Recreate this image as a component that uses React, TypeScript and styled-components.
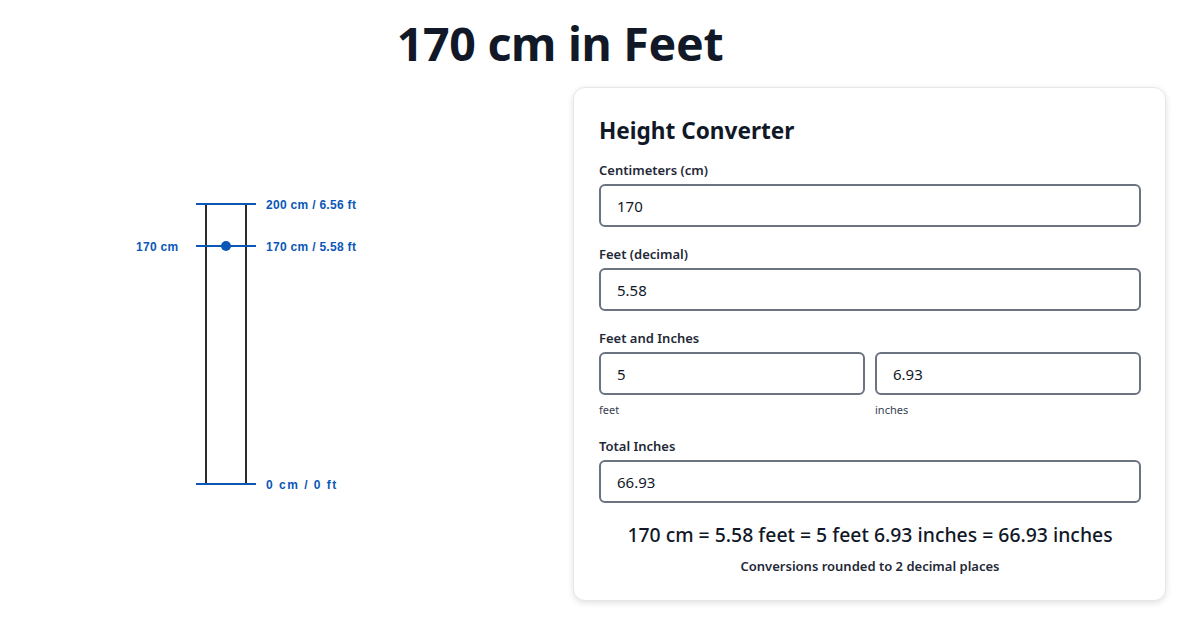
import React from "react";
import styled, { createGlobalStyle } from "styled-components";

const Global = createGlobalStyle`
  html, body { margin: 0; padding: 0; background: #ffffff; }
  body { font-family: "Noto Sans", "Open Sans", Arial, sans-serif; color: #111827; }
  * { box-sizing: border-box; }
`;

const Page = styled.div`
  width: 1200px;
  height: 630px;
  display: flex;
  flex-direction: column;
`;

const Title = styled.h1`
  margin: 12px 0 0 0;
  padding-right: 80px;
  text-align: center;
  font-size: 46.5px;
  line-height: 62px;
  font-weight: 700;
  color: #111827;
  letter-spacing: -0.3px;
`;

const Main = styled.div`
  display: grid;
  grid-template-columns: 573px 593px;
  margin-top: 13px;
`;

const ChartCol = styled.div`
  display: flex;
`;

const Card = styled.section`
  border: 1px solid #e5e7eb;
  border-radius: 12px;
  box-shadow: 0 2px 6px rgba(0, 0, 0, 0.12);
  padding: 29px 24px 24px 25px;
  display: flex;
  flex-direction: column;
  background: #fff;
`;

const CardTitle = styled.h2`
  margin: 0 0 16px 0;
  font-size: 22.6px;
  line-height: 28px;
  font-weight: 700;
  color: #111827;
`;

const Field = styled.div<{ $gap?: number }>`
  display: flex;
  flex-direction: column;
  margin-bottom: ${(p) => (p.$gap ?? 18)}px;
`;

const Label = styled.label`
  font-size: 13px;
  line-height: 18px;
  font-weight: 600;
  color: #1f2937;
  margin-bottom: 5px;
`;

const Input = styled.input`
  width: 100%;
  height: 43px;
  border: 2px solid #6b7280;
  border-radius: 6px;
  padding: 0 16px;
  font-family: "Noto Sans", "Open Sans", Arial, sans-serif;
  font-size: 15px;
  color: #111827;
  background: #fff;
  outline: none;
`;

const Pair = styled.div`
  display: grid;
  grid-template-columns: 1fr 1fr;
  column-gap: 10px;
`;

const Sub = styled.span`
  display: block;
  font-size: 11px;
  line-height: 16px;
  color: #374151;
  margin-top: 7px;
`;

const Summary = styled.p`
  margin: 0 0 0 0;
  text-align: center;
  font-size: 19.4px;
  line-height: 26px;
  font-weight: 500;
  color: #111827;
`;

const Note = styled.p`
  margin: 9px 0 0 0;
  text-align: center;
  font-size: 13px;
  line-height: 18px;
  font-weight: 600;
  color: #1f2937;
`;

const BLUE = "#0b57b8";
const DARK = "#2b2b2b";

function Chart() {
  const top = 117;
  const bottom = 397;
  const scale = (bottom - top) / 200;
  const y170 = bottom - 170 * scale;
  const labelStyle = {
    fontFamily: '"Liberation Sans", Arial, sans-serif',
    fontSize: 12,
    fontWeight: 700,
    fill: BLUE,
    letterSpacing: 0.3,
  } as const;
  return (
    <svg width={573} height={514} viewBox="0 0 573 514">
      <line x1={206} y1={top} x2={206} y2={bottom} stroke={DARK} strokeWidth={2} />
      <line x1={246} y1={top} x2={246} y2={bottom} stroke={DARK} strokeWidth={2} />
      <line x1={196} y1={top} x2={256} y2={top} stroke={BLUE} strokeWidth={2} />
      <line x1={196} y1={y170} x2={256} y2={y170} stroke={BLUE} strokeWidth={2} />
      <line x1={196} y1={bottom} x2={256} y2={bottom} stroke={BLUE} strokeWidth={2} />
      <circle cx={226} cy={y170} r={5} fill={BLUE} />
      <text x={266} y={top + 5} style={labelStyle}>200 cm / 6.56 ft</text>
      <text x={266} y={y170 + 5} style={labelStyle}>170 cm / 5.58 ft</text>
      <text x={266} y={bottom + 5} style={{ ...labelStyle, letterSpacing: 1.5 }}>0 cm / 0 ft</text>
      <text x={136} y={y170 + 5} style={labelStyle}>170 cm</text>
    </svg>
  );
}

export default function App() {
  return (
    <Page>
      <Global />
      <Title>170 cm in Feet</Title>
      <Main>
        <ChartCol>
          <Chart />
        </ChartCol>
        <Card>
          <CardTitle>Height Converter</CardTitle>
          <Field>
            <Label>Centimeters (cm)</Label>
            <Input defaultValue="170" />
          </Field>
          <Field>
            <Label>Feet (decimal)</Label>
            <Input defaultValue="5.58" />
          </Field>
          <Field $gap={19}>
            <Label>Feet and Inches</Label>
            <Pair>
              <div>
                <Input defaultValue="5" />
                <Sub>feet</Sub>
              </div>
              <div>
                <Input defaultValue="6.93" />
                <Sub>inches</Sub>
              </div>
            </Pair>
          </Field>
          <Field $gap={19}>
            <Label>Total Inches</Label>
            <Input defaultValue="66.93" />
          </Field>
          <Summary>170 cm = 5.58 feet = 5 feet 6.93 inches = 66.93 inches</Summary>
          <Note>Conversions rounded to 2 decimal places</Note>
        </Card>
      </Main>
    </Page>
  );
}
